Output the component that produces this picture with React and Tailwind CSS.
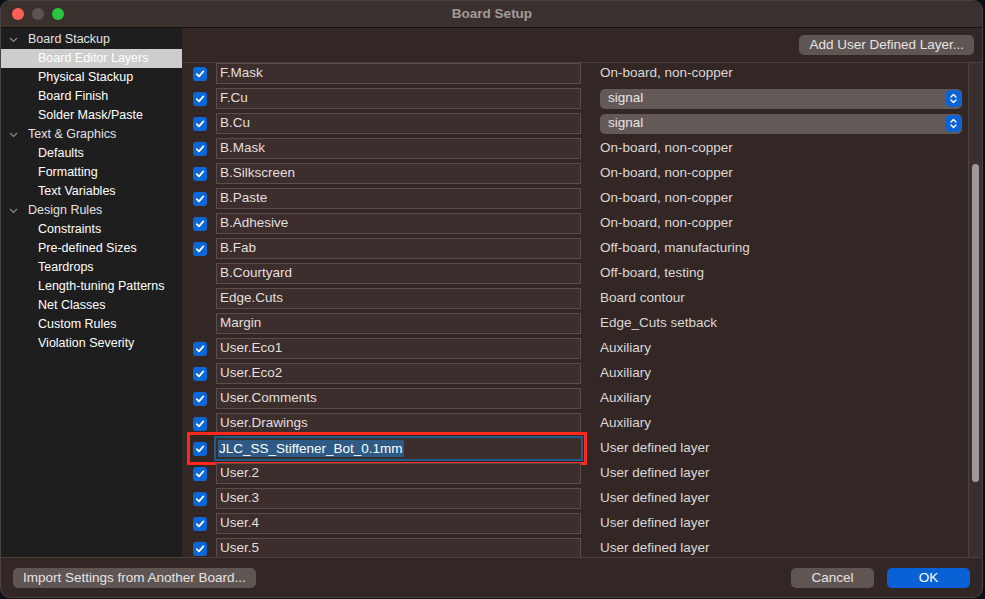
import React from 'react'

const TREE = [
  { label: 'Board Stackup', group: true },
  { label: 'Board Editor Layers', selected: true },
  { label: 'Physical Stackup' },
  { label: 'Board Finish' },
  { label: 'Solder Mask/Paste' },
  { label: 'Text & Graphics', group: true },
  { label: 'Defaults' },
  { label: 'Formatting' },
  { label: 'Text Variables' },
  { label: 'Design Rules', group: true },
  { label: 'Constraints' },
  { label: 'Pre-defined Sizes' },
  { label: 'Teardrops' },
  { label: 'Length-tuning Patterns' },
  { label: 'Net Classes' },
  { label: 'Custom Rules' },
  { label: 'Violation Severity' },
]

const LAYERS = [
  { name: 'F.Mask', check: true, desc: 'On-board, non-copper' },
  { name: 'F.Cu', check: true, select: 'signal' },
  { name: 'B.Cu', check: true, select: 'signal' },
  { name: 'B.Mask', check: true, desc: 'On-board, non-copper' },
  { name: 'B.Silkscreen', check: true, desc: 'On-board, non-copper' },
  { name: 'B.Paste', check: true, desc: 'On-board, non-copper' },
  { name: 'B.Adhesive', check: true, desc: 'On-board, non-copper' },
  { name: 'B.Fab', check: true, desc: 'Off-board, manufacturing' },
  { name: 'B.Courtyard', check: false, desc: 'Off-board, testing' },
  { name: 'Edge.Cuts', check: false, desc: 'Board contour' },
  { name: 'Margin', check: false, desc: 'Edge_Cuts setback' },
  { name: 'User.Eco1', check: true, desc: 'Auxiliary' },
  { name: 'User.Eco2', check: true, desc: 'Auxiliary' },
  { name: 'User.Comments', check: true, desc: 'Auxiliary' },
  { name: 'User.Drawings', check: true, desc: 'Auxiliary' },
  { name: 'JLC_SS_Stiffener_Bot_0.1mm', check: true, desc: 'User defined layer', focus: true },
  { name: 'User.2', check: true, desc: 'User defined layer' },
  { name: 'User.3', check: true, desc: 'User defined layer' },
  { name: 'User.4', check: true, desc: 'User defined layer' },
  { name: 'User.5', check: true, desc: 'User defined layer' },
]

const font = { fontFamily: '"Liberation Sans", Arial, sans-serif' }

function Checkbox() {
  return (
    <div className="w-[14px] h-[14px] rounded-[3px] bg-[#0b66d6] flex items-center justify-center">
      <svg width="10" height="10" viewBox="0 0 10 10">
        <path d="M1.8 5.2 L4 7.4 L8.3 2.4" fill="none" stroke="white" strokeWidth="1.8" strokeLinecap="round" strokeLinejoin="round" />
      </svg>
    </div>
  )
}

function SelectBox({ value }) {
  return (
    <div className="w-[362px] h-[20px] rounded-[5px] bg-[#635a58] flex items-center justify-between pl-[8px] pr-[1px]">
      <span className="text-[#e9e4e3]">{value}</span>
      <div className="w-[15px] h-[17px] rounded-[4px] bg-[#0b63d6] flex items-center justify-center">
        <svg width="9" height="13" viewBox="0 0 9 13">
          <path d="M2 5 L4.5 2.5 L7 5 M2 8 L4.5 10.5 L7 8" fill="none" stroke="white" strokeWidth="1.4" strokeLinecap="round" strokeLinejoin="round" />
        </svg>
      </div>
    </div>
  )
}

export default function App() {
  return (
    <div className="w-[985px] h-[599px] bg-[#0b1119] overflow-hidden text-[13.5px]" style={font}>
      <div className="w-[983px] h-[598px] rounded-[10px] overflow-hidden border border-[#4a4240] bg-[#322725] flex flex-col">
        {/* Title bar */}
        <div className="h-[27px] shrink-0 bg-[#3a312f] border-b border-[#161110] flex items-center">
          <div className="flex items-center gap-[8px] pl-[11px]">
            <div className="w-[12px] h-[12px] rounded-full bg-[#fe5f57]" />
            <div className="w-[12px] h-[12px] rounded-full bg-[#5c5352]" />
            <div className="w-[12px] h-[12px] rounded-full bg-[#2ac640]" />
          </div>
          <div className="flex-1 text-center font-bold text-[13.5px] text-[#a39b99] pr-[62px]">Board Setup</div>
        </div>

        <div className="flex flex-1 min-h-0">
          {/* Sidebar */}
          <div className="w-[181px] shrink-0 bg-[#1e1e1e] pt-[2px] text-[12.5px]">
            {TREE.map((t) => (
              <div key={t.label}
                className={`h-[19px] flex items-center ${t.selected ? 'bg-[#cdcdcd]' : ''}`}>
                {t.group ? (
                  <>
                    <svg width="9" height="6" viewBox="0 0 9 6" className="ml-[8px] mr-[10px]">
                      <path d="M1 1 L4.5 4.5 L8 1" fill="none" stroke="#8a8a8a" strokeWidth="1.2" />
                    </svg>
                    <span className="text-[#e2e2e2]">{t.label}</span>
                  </>
                ) : (
                  <span className="pl-[37px] text-white">{t.label}</span>
                )}
              </div>
            ))}
          </div>

          {/* Main */}
          <div className="flex-1 flex flex-col min-w-0">
            <div className="h-[35px] shrink-0 flex items-center justify-end pr-[8px] border-b border-[#4a3f3d]">
              <button className="h-[20px] px-[10px] rounded-[5px] bg-[#5f5654] text-[#e8e3e2]">
                Add User Defined Layer...
              </button>
            </div>
            <div className="flex flex-1 min-h-0">
              <div className="flex-1 overflow-hidden">
                <div className="-mt-[2px]">
                  {LAYERS.map((l) => (
                    <div key={l.name} className="h-[25px] flex items-center relative">
                      <div className="w-[14px] ml-[11px] mr-[9px] flex justify-center">
                        {l.check && <Checkbox />}
                      </div>
                      {l.focus ? (
                        <div className="w-[369px] h-[25px] -ml-[2px] border-[2px] border-[#1f5c8c] bg-[#3b2e2c] flex items-center pl-[2px]">
                          <span className="bg-[#2f5a85] text-white leading-[17px] px-[1px]">{l.name}</span>
                        </div>
                      ) : (
                        <div className="w-[365px] h-[21px] border border-[#5a4e4c] bg-[#3b2e2c] flex items-center pl-[3px] text-[#e5dfde]">
                          {l.name}
                        </div>
                      )}
                      <div className={`${l.focus ? 'ml-[17px]' : 'ml-[19px]'}`}>
                        {l.select ? <SelectBox value={l.select} /> : <span className="text-[#ddd7d6]">{l.desc}</span>}
                      </div>
                      {l.focus && (
                        <div className="absolute left-[5px] -top-[4px] w-[400px] h-[33px] border-[3px] border-[#ff2a1f]" />
                      )}
                    </div>
                  ))}
                </div>
              </div>
              {/* Scrollbar */}
              <div className="w-[14px] shrink-0 bg-[#3a2f2d] border-l border-[#4c4240] pt-[101px]">
                <div className="ml-[3px] w-[7px] h-[318px] rounded-full bg-[#9f9896]" />
              </div>
            </div>
          </div>
        </div>

        {/* Footer */}
        <div className="h-[40px] shrink-0 border-t border-[#4a3f3d] flex items-center justify-between px-[12px]">
          <button className="h-[20px] px-[10px] rounded-[5px] bg-[#5f5654] text-[#e8e3e2]">
            Import Settings from Another Board...
          </button>
          <div className="flex gap-[13px]">
            <button className="w-[83px] h-[20px] rounded-[5px] bg-[#5f5654] text-[#e8e3e2]">Cancel</button>
            <button className="w-[83px] h-[20px] rounded-[5px] bg-[#0a60d5] text-white">OK</button>
          </div>
        </div>
      </div>
    </div>
  )
}
